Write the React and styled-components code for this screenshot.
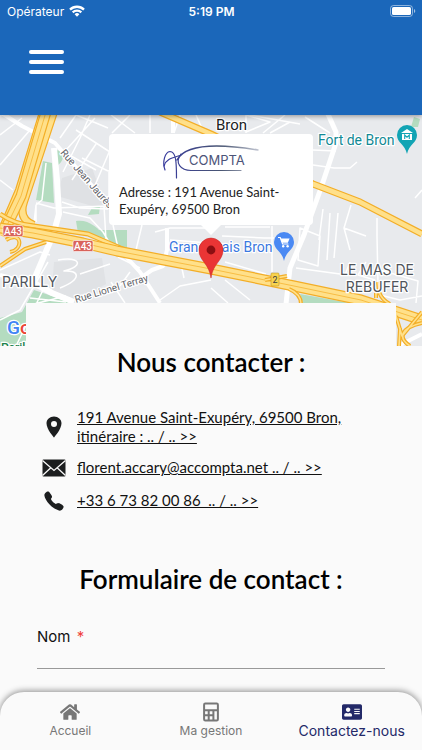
import React from "react";
import styled, { createGlobalStyle } from "styled-components";
import { FaAddressCard, FaHome } from "react-icons/fa";
import { IoCall, IoLocationSharp } from "react-icons/io5";

const tabs = [
    { name: "Accueil", href: "#accueil", icon: <FaHome size={20}/> },
    { name: "Ma gestion", href: "#gestion", icon: <CalculatorIcon/> },
    { name: "Contactez-nous", href: "#contact", icon: <FaAddressCard size={20}/>, active: true },
];

const App = () => {
    return (
        <Screen>
            <GlobalStyle/>
            <Header>
                <StatusBar>
                    <Carrier>Opérateur <WifiIcon/></Carrier>
                    <Clock>5:19 PM</Clock>
                    <Battery><BatteryIcon/></Battery>
                </StatusBar>
                <MenuButton aria-label="Menu">
                    <span/>
                    <span/>
                    <span/>
                </MenuButton>
            </Header>

            <MapArea>
                <CityMap/>
                <Callout>
                    <Logo/>
                    <p>Adresse : 191 Avenue Saint-Exupéry, 69500 Bron</p>
                </Callout>
            </MapArea>

            <Sheet>
                <Title>Nous contacter :</Title>
                <ContactList>
                    <ContactRow>
                        <IoLocationSharp size={24}/>
                        <a href="#itineraire">191 Avenue Saint-Exupéry, 69500 Bron, itinéraire : .. / .. &gt;&gt;</a>
                    </ContactRow>
                    <ContactRow>
                        <MailIcon/>
                        <a href="mailto:florent.accary@accompta.net">florent.accary@accompta.net .. / .. &gt;&gt;</a>
                    </ContactRow>
                    <ContactRow>
                        <IoCall size={22}/>
                        <a href="tel:+33673820086">+33 6 73 82 00 86 &nbsp;.. / .. &gt;&gt;</a>
                    </ContactRow>
                </ContactList>

                <Title>Formulaire de contact :</Title>
                <Form>
                    <label htmlFor="nom">Nom <em>*</em></label>
                    <input id="nom" type="text" required/>
                </Form>
            </Sheet>

            <TabBar>
                {tabs.map((tab) => (
                    <Tab key={tab.name} href={tab.href} $active={tab.active}>
                        {tab.icon}
                        {tab.name}
                    </Tab>
                ))}
            </TabBar>
        </Screen>
    )
}

export default App;

function WifiIcon() {
    return (
        <svg width="16" height="12" viewBox="0 0 16 12" fill="none" stroke="#fff" strokeWidth="2.3">
            <path d="M1 4.6a10 10 0 0 1 14 0"/>
            <path d="M3.7 7.4a6.1 6.1 0 0 1 8.6 0"/>
            <path d="M8 11.8L5.6 9.3a3.4 3.4 0 0 1 4.8 0z" fill="#fff" stroke="none"/>
        </svg>
    )
}

function BatteryIcon() {
    return (
        <svg width="26" height="12" viewBox="0 0 26 12">
            <rect x="0.5" y="0.5" width="22" height="11" rx="3" fill="none" stroke="#fff" strokeOpacity="0.5"/>
            <rect x="2" y="2" width="19" height="8" rx="1.6" fill="#fff"/>
            <path d="M24 4v4a2.2 2.2 0 0 0 0-4z" fill="#fff" fillOpacity="0.6"/>
        </svg>
    )
}

function CalculatorIcon() {
    return (
        <svg width="20" height="20" viewBox="0 0 20 20" fill="none" stroke="currentColor" strokeWidth="2">
            <rect x="3.1" y="1.6" width="13.8" height="16.8" rx="1.2"/>
            <path d="M3 8.2h14M3 13.2h9.4M7.7 8.2v10M12.4 8.2v10"/>
        </svg>
    )
}

function MailIcon() {
    return (
        <svg width="24" height="18" viewBox="0 0 24 18">
            <rect x="0.5" y="0.5" width="23" height="17" rx="1" fill="#1c1e1f"/>
            <path d="M0.5 1.5L12 11.5L23.5 1.5M0.5 16.5L8.6 9M23.5 16.5L15.4 9" fill="none" stroke="#fafafa" strokeWidth="1.3"/>
        </svg>
    )
}

function Logo() {
    return (
        <svg width="100" height="36" viewBox="0 0 100 36" role="img" aria-label="AC Compta">
            <defs>
                <linearGradient id="sweep" gradientUnits="userSpaceOnUse" x1="0" x2="100" y1="0" y2="0">
                    <stop offset="0" stopColor="#3538a0"/>
                    <stop offset="0.6" stopColor="#4a5673"/>
                    <stop offset="1" stopColor="#c7cbd6"/>
                </linearGradient>
            </defs>
            <g fill="none" stroke="url(#sweep)" strokeLinecap="round">
                <path d="M4 26C1 18 4 8 9 7.5C15 7.5 15.5 18 15.5 34" strokeWidth="1.2"/>
                <path d="M3 22C5 15 11 14 19 11.5" strokeWidth="1.2"/>
                <path d="M16 16C24 1 54-1 97 6" strokeWidth="1.5"/>
                <path d="M20 10C13 19 20 26.5 30 26.5H80" strokeWidth="1.2"/>
            </g>
            <text x="28" y="21" fill="#4c5478" fontFamily="Inter, sans-serif" fontSize="13">COMPTA</text>
        </svg>
    )
}

function Badge({ x, y }) {
    return (
        <g transform={`translate(${x} ${y})`}>
            <rect x="-10" y="-5.5" width="20" height="11" rx="1.5" fill="#d9635b" stroke="#fff" strokeWidth="0.6"/>
            <text y="3.6" fill="#fff" fontSize="10" fontWeight="500" textAnchor="middle">A43</text>
        </g>
    )
}

// wide road: orange casing, yellow fill, thin centre line
function Motorway({ d, width }) {
    return (
        <g>
            <path d={d} stroke="#f3ae27" strokeWidth={width}/>
            <path d={d} stroke="#ffe08a" strokeWidth={width - 2.4}/>
            {width > 8 && <path d={d} stroke="#f7bd45" strokeWidth="1"/>}
        </g>
    )
}

function CityMap() {
    return (
        <svg viewBox="0 115 422 231" preserveAspectRatio="xMidYMid slice" role="img" aria-label="Plan de Bron" fontFamily="Roboto, sans-serif">
            <rect x="-100" y="0" width="700" height="500" fill="#e8eaed"/>
            <path d="M62 178L92 168L106 206L96 207L57 196z" fill="#dfe1e4"/>
            <path d="M54 262L102 258L106 284L76 301L52 290z" fill="#e0e2e5"/>
            <g fill="#b4dcc0">
                <path d="M43 161L52 163L54 203L36 200z"/>
                <path d="M55 150C65 150 65 160 58 165z"/>
                <path d="M92 208L100 206L99 214L88 215z"/>
                <path d="M76 221C88 219 98 227 106 238L78 233z"/>
                <path d="M92 230H127V248L116 247z"/>
                <path d="M34 290L52 296L70 303H26V346H0V318L22 312z"/>
                <path d="M300 294L350 303H303z"/>
                <path d="M414 117L420 119L418 127H411z"/>
            </g>
            <g fill="none" stroke="#fff" strokeWidth="1.5" strokeLinejoin="round">
                <path d="M0 135L22 118M0 165L30 130M0 180L13 190M60 138L76 115M76 115L96 123L108 128M66 150L95 118M76 130L110 152M90 115L80 138L63 172M64 152L96 170M96 144L72 180M110 150L93 190M82 158L108 171M46 163L42 200L36 205L33 232M36 203L54 208L108 206M62 202L80 208L108 209M63 212L90 218L103 232L109 242M36 205V222M104 206L106 240M109 170V206"/>
                <path d="M111 115L135 133M130 115L112 133M150 133V115M180 115L174 133M196 115L204 133M246 133V115L270 122L246 132M250 115L300 124M285 115L263 133M305 117L330 133M270 133L290 122M313 165L334 168L350 168L357 162M313 150L336 151M422 190L415 198"/>
                <path d="M113 225L118 248M142 225L136 250M155 232L170 228L205 228M170 240L210 243M225 227H270M222 236L264 238L274 238M272 226V272M225 262L266 274M351 205L344 228L350 250M377 218V236M344 228L366 236M377 236L378 285M350 262L345 275M300 228L320 236L318 266L298 260zM323 209L319 240M330 213L327 260M338 213L334 258M296 268L340 274M366 262L358 275L375 280M380 270L418 281L416 303M376 294L400 300L422 296"/>
                <path d="M0 270L40 252L50 255M48 262L20 310L0 320M43 290L16 346M58 260C80 256 85 266 64 271C78 270 84 278 60 288M80 274L110 264M111 282L125 303M118 257L140 268M160 300L180 286L211 280M181 264L184 278M225 280L250 300M211 288L228 303M130 272L120 286M30 298L66 302M26 306L66 296"/>
            </g>
            <g fill="none" stroke="#fff" strokeWidth="4" strokeLinejoin="round">
                <path d="M0 112L22 126L55 143L107 203"/>
                <path d="M54 148L57 180L59 214L53 235L36 275L32 282L52 293L74 302" strokeWidth="6"/>
                <path d="M0 275L32 284"/>
                <path d="M327 112L336 132L336 143L321 188L304 235L290 268L286 304" strokeWidth="5"/>
                <path d="M120 250L140 272L160 303M142 277L152 270L163 266L167 250V228"/>
                <path d="M173 115V133M398 346L422 334"/>
            </g>
            <g fill="none" strokeLinejoin="round">
                <Motorway d="M0 266L25 249L46 242M6 240C22 230 24 250 10 252" width={4}/>
                <Motorway d="M160 112L211 134L313 184L360 202L422 234" width={7}/>
                <Motorway d="M43 112L19 190L0 234M54 112L24 202Q18 219 34 225" width={8}/>
                <Motorway d="M46 112L21 196L2 236" width={11}/>
                <Motorway d="M0 214Q14 224 34 226L88 234L125 250" width={5}/>
                <Motorway d="M0 228L33 233L83 243L117 251L211 269L294 286L361 300L422 320" width={11}/>
                <Motorway d="M265 280L287 276M289 289Q301 294 301 304M378 282L379 292Q382 300 390 304M376 292L376 298M396 316L402 336L422 312M399 346L400 328M422 323C400 328 398 338 410 346" width={4}/>
            </g>

            <g stroke="#fff" strokeWidth="2.5" strokeLinejoin="round" paintOrder="stroke" fill="#5f6368" fontSize="10">
                <text transform="translate(60 153) rotate(49)">Rue Jean Jaurès</text>
                <text transform="translate(76 303) rotate(-17)">Rue Lionel Terray</text>
                <text x="216" y="130" fill="#202124" fontSize="15">Bron</text>
                <text x="318" y="145" fill="#128995" fontSize="14">Fort de Bron</text>
                <text x="169" y="252" fill="#3b78e0" fontSize="14">Grand Frais Bron</text>
                <g fontFamily="Inter, sans-serif" fontSize="14" fill="#50555b">
                    <text x="2" y="287">PARILLY</text>
                    <text x="377" y="275" textAnchor="middle">LE MAS DE</text>
                    <text x="377" y="292" textAnchor="middle">REBUFER</text>
                </g>
                <text x="7" y="334" fill="#4285f4" fontSize="19" fontWeight="500">G<tspan fill="#ea4335">o</tspan></text>
                <text x="1" y="352" fill="#1a7f4b" fontSize="12" fontWeight="500">Parilly</text>
            </g>

            <Badge x={13} y={231}/>
            <Badge x={83} y={246}/>
            <rect x="271" y="273" width="8" height="13" rx="1" fill="#f8d34f" stroke="#b58a1f" strokeWidth="0.5"/>
            <text x="275" y="283" fontSize="9" textAnchor="middle" fill="#3c4043">2</text>

            <g transform="translate(407 135)">
                <path d="M0 19C-2 9-10 8-10 0A10 10 0 0 1 10 0C10 8 2 9 0 19z" fill="#12a4b4"/>
                <path d="M-6-2L0-6L6-2zM-5-1h10v6h-10z" fill="#fff"/>
                <path d="M-2.3 4V0L0 2.2L2.3 0V4" fill="none" stroke="#12a4b4" strokeWidth="1.1"/>
            </g>
            <g transform="translate(284 242)">
                <path d="M0 19C-2 9-10 8-10 0A10 10 0 0 1 10 0C10 8 2 9 0 19z" fill="#4a89f3"/>
                <path d="M-6-4.5H-3.8L-1.4 2H4.4" fill="none" stroke="#fff" strokeWidth="1.2"/>
                <path d="M-3.4-3.4H5.6L3.8 0.8H-1.8z" fill="#fff"/>
                <circle cx="-0.8" cy="4.2" r="1.2" fill="#fff"/>
                <circle cx="3.6" cy="4.2" r="1.2" fill="#fff"/>
            </g>
            <path d="M211 278C209 263 199 261 199 250A12 12 0 0 1 223 250C223 261 213 263 211 278z" fill="#ea3535" stroke="#c5221f" strokeWidth="0.5"/>
            <circle cx="211" cy="250" r="4.4" fill="#8b0f12"/>
        </svg>
    )
}

const GlobalStyle = createGlobalStyle`
    * {
        box-sizing: border-box;
    }

    body {
        margin: 0;
        background: #fafafa;
        font-family: Lato, sans-serif;
        color: #111;
    }
`;

const Screen = styled.div`
    height: 100vh;
    display: flex;
    flex-direction: column;
    overflow: hidden;
`;

const Header = styled.header`
    flex: none;
    height: 115px;
    background: #1b67ba;
    color: #fff;
    box-shadow: 0 1px 5px rgba(0, 0, 0, 0.4);
    z-index: 1;
`;

const StatusBar = styled.div`
    display: grid;
    grid-template-columns: 1fr auto 1fr;
    align-items: center;
    height: 22px;
    padding: 0 6px 0 7px;
    font-family: Inter, sans-serif;
    font-size: 12px;
`;

const Carrier = styled.span`
    display: flex;
    align-items: center;
    gap: 5px;
`;

const Clock = styled.span`
    font-weight: 600;
`;

const Battery = styled.span`
    display: flex;
    justify-content: flex-end;
`;

const MenuButton = styled.button`
    display: flex;
    flex-direction: column;
    gap: 6px;
    width: 35px;
    margin: 28px 29px;
    padding: 0;
    border: 0;
    background: none;

    span {
        width: 100%;
        height: 4px;
        border-radius: 2px;
        background: #fff;
    }
`;

const MapArea = styled.section`
    flex: none;
    position: relative;
    height: 231px;

    > svg {
        display: block;
        width: 100%;
        height: 100%;
    }
`;

/* info window floating over the map pin */
const Callout = styled.div`
    position: absolute;
    top: 19px;
    left: 50%;
    width: 204px;
    height: 91px;
    padding: 10px;
    border-radius: 4px;
    background: #fff;
    transform: translateX(-50%);

    svg {
        display: block;
        margin: 0 auto;
    }

    p {
        margin: 4px 0 0;
        font-size: 13px;
        line-height: 17px;
        color: #222;
    }

    &::after {
        content: "";
        position: absolute;
        top: 100%;
        left: 50%;
        border: 10px solid transparent;
        border-top-color: #fff;
        border-bottom: 0;
        transform: translateX(-50%);
    }
`;

const Sheet = styled.main`
    flex: 1;
    min-height: 0;
    margin: -43px 26px 0;
    padding-top: 40px;
    background: #fafafa;
    z-index: 1;
`;

const Title = styled.h1`
    margin: 0;
    font-size: 26px;
    line-height: 38px;
    font-weight: 600;
    text-align: center;
    color: #000;
`;

const ContactList = styled.ul`
    display: flex;
    flex-direction: column;
    gap: 10px;
    margin: 27px 0 48px;
    padding: 0 16px;
    list-style: none;
`;

const ContactRow = styled.li`
    display: grid;
    grid-template-columns: 24px 1fr;
    align-items: center;
    gap: 11px;
    min-height: 23px;
    font-size: 15px;
    line-height: 19px;

    svg {
        justify-self: center;
        color: #1c1e1f;
    }

    a {
        color: #111;
        text-decoration: underline;
    }
`;

const Form = styled.form`
    margin: 28px 11px 0;
    font-family: Inter, sans-serif;
    font-size: 15px;

    label {
        display: block;
        line-height: 22px;
    }

    em {
        margin-left: 2px;
        font-style: normal;
        color: #f0403a;
    }

    input {
        display: block;
        width: 100%;
        height: 21px;
        padding: 0;
        border: 0;
        border-bottom: 1px solid #999;
        background: none;
        font: inherit;
        outline: none;
    }
`;

const TabBar = styled.nav`
    flex: none;
    display: grid;
    grid-template-columns: repeat(3, 1fr);
    height: 58px;
    border-radius: 24px 24px 0 0;
    background: #fafafa;
    box-shadow: 0 -1px 6px rgba(0, 0, 0, 0.45);
    z-index: 2;
`;

const Tab = styled.a`
    display: flex;
    flex-direction: column;
    align-items: center;
    gap: 1px;
    padding-top: 10px;
    font-family: Inter, sans-serif;
    font-size: ${({ $active }) => ($active ? 14 : 12)}px;
    line-height: 16px;
    color: ${({ $active }) => ($active ? "#232968" : "#777")};
    text-decoration: none;
    white-space: nowrap;
`;
